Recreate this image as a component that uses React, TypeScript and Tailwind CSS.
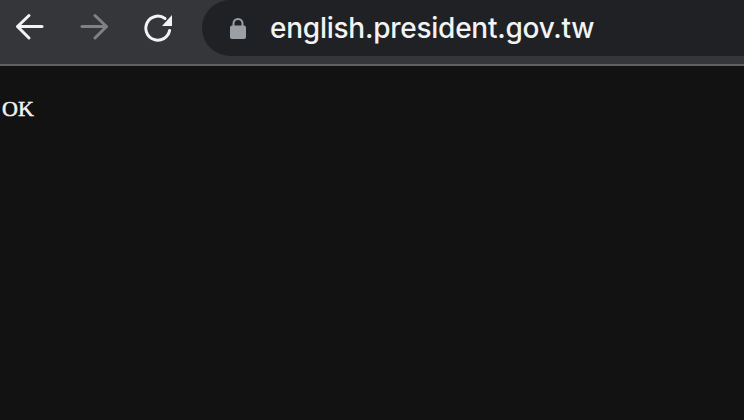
export default function App() {
  return (
    <div className="w-[744px] h-[420px] overflow-hidden bg-[#121212] flex flex-col">
      <div className="h-[66px] shrink-0 bg-[#35363a] border-b-2 border-[#5f6063] flex items-start pl-[14px]">
        <div className="h-[56px] flex items-center gap-[34px]">
          <svg width="30" height="30" viewBox="0 0 30 30" fill="none" stroke="#f1f3f4" strokeWidth="3" strokeLinecap="round" strokeLinejoin="round">
            <path d="M28 13.5H4" />
            <path d="M15 2.5L3.5 13.5L15 25" />
          </svg>
          <svg width="30" height="30" viewBox="0 0 30 30" fill="none" stroke="#808184" strokeWidth="3" strokeLinecap="round" strokeLinejoin="round">
            <path d="M4 13.5H28" />
            <path d="M17 2.5L28.5 13.5L17 25" />
          </svg>
          <svg width="32" height="30" viewBox="0 0 32 30" fill="none">
            <path d="M27.6 17.5A12 12 0 1 1 23 5.5" stroke="#f1f3f4" strokeWidth="3" strokeLinecap="round" />
            <path d="M30 2V13H20Z" fill="#f1f3f4" />
          </svg>
        </div>
        <div className="ml-[28px] flex-1 h-[56px] bg-[#202124] rounded-l-[28px] flex items-center">
          <svg className="ml-[26px]" width="20" height="24" viewBox="0 0 20 24">
            <path d="M5.5 11V7.5a4.5 4.5 0 0 1 9 0V11" fill="none" stroke="#9aa0a6" strokeWidth="2" />
            <rect x="2" y="9.5" width="16" height="13.5" rx="2" fill="#9aa0a6" />
          </svg>
          <span className="ml-[22px] font-['Inter',sans-serif] text-[28px] font-[450] tracking-[-0.25px] leading-none text-[#f1f3f4]">english.president.gov.tw</span>
        </div>
      </div>
      <pre className="pl-[2px] pt-[28px] font-['Liberation_Serif',serif] text-[22px] [-webkit-text-stroke:0.5px_#f1f3f4] leading-[30px] text-[#f1f3f4]">OK</pre>
    </div>
  )
}
